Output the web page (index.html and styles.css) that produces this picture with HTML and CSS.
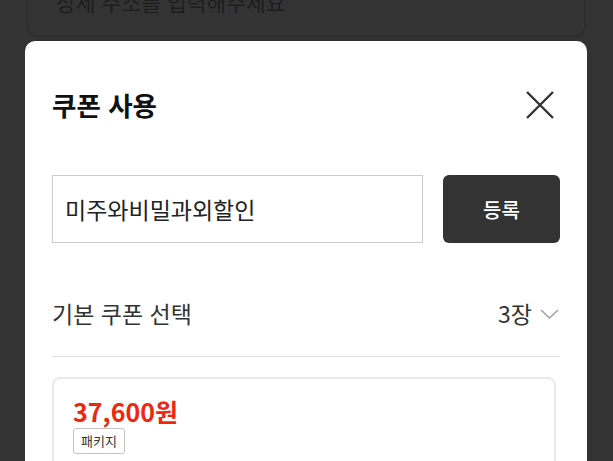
FILE: index.html
```html
<!DOCTYPE html>
<html lang="ko">
<head>
<meta charset="utf-8">
<link rel="stylesheet" href="styles.css">
</head>
<body>
  <div class="behind">
    <div class="behind-text">상세 주소를 입력해주세요</div>
  </div>
  <div class="modal">
    <div class="header">
      <h1 class="title">쿠폰 사용</h1>
      <svg class="close" width="28" height="28" viewBox="0 0 28 28">
        <path d="M1 1 L27 27 M27 1 L1 27" stroke="#333" stroke-width="2.4" fill="none"/>
      </svg>
    </div>
    <div class="code-row">
      <div class="code-input">미주와비밀과외할인</div>
      <div class="code-btn">등록</div>
    </div>
    <div class="select-row">
      <span class="select-label">기본 쿠폰 선택</span>
      <span class="select-count">3장
        <svg class="chev" width="19" height="10" viewBox="0 0 19 10">
          <path d="M1 1 L9.5 9 L18 1" stroke="#a0a0a0" stroke-width="1.5" fill="none"/>
        </svg>
      </span>
    </div>
    <div class="coupon">
      <div class="price">37,600원</div>
      <span class="badge">패키지</span>
    </div>
  </div>
</body>
</html>
```

FILE: styles.css
```css
html, body {
  margin: 0;
  padding: 0;
  background: #333333;
  height: 100%;
  overflow: hidden;
  font-family: "Noto Sans CJK KR", "Noto Sans", sans-serif;
}
.behind {
  height: 37px;
  margin: 0 28px 0 27px;
  border: 1px solid #2a2a2a;
  border-top: none;
  border-radius: 0 0 10px 10px;
  padding-left: 28px;
  overflow: hidden;
  box-sizing: border-box;
}
.behind-text {
  margin-top: -13px;
  line-height: 30px;
  font-size: 21.5px;
  color: #1e1e1e;
  white-space: nowrap;
}
.modal {
  margin: 4px 26px 0 25px;
  background: #fff;
  border-radius: 10px 10px 0 0;
  padding: 47px 27px 0 27px;
  height: 500px;
}
.header {
  display: flex;
  justify-content: space-between;
  align-items: center;
  height: 34px;
}
.title {
  margin: 0;
  font-size: 26.5px;
  font-weight: 700;
  line-height: 34px;
  color: #111;
}
.close {
  margin-right: 6px;
}
.code-row {
  display: flex;
  gap: 20px;
  margin-top: 53px;
  height: 68px;
}
.code-input {
  flex: 1;
  border: 1px solid #cccccc;
  display: flex;
  align-items: center;
  padding-left: 12px;
  font-size: 23px;
  color: #222;
}
.code-btn {
  width: 117px;
  background: #333333;
  border-radius: 6px;
  color: #fff;
  font-size: 20px;
  font-weight: 500;
  display: flex;
  align-items: center;
  justify-content: center;
}
.select-row {
  display: flex;
  justify-content: space-between;
  align-items: center;
  margin-top: 54px;
  height: 32px;
  padding-bottom: 27px;
  border-bottom: 1px solid #dddddd;
}
.select-label, .select-count {
  font-size: 23px;
  color: #333;
  line-height: 32px;
}
.select-count {
  display: flex;
  align-items: center;
  margin-right: 1px;
}
.chev {
  margin-left: 8px;
  margin-top: 2px;
}
.coupon {
  margin: 20px 4px 0 0;
  border: 2px solid #e8e8e8;
  border-radius: 8px;
  padding: 17px 20px 20px 19px;
  height: 200px;
}
.price {
  font-size: 25px;
  font-weight: 700;
  color: #f0260f;
  line-height: 31px;
}
.badge {
  display: inline-block;
  height: 26px;
  line-height: 24px;
  box-sizing: border-box;
  border: 1px solid #c4c4c4;
  border-radius: 3px;
  padding: 0 7px;
  font-size: 13px;
  color: #333;
}
```
